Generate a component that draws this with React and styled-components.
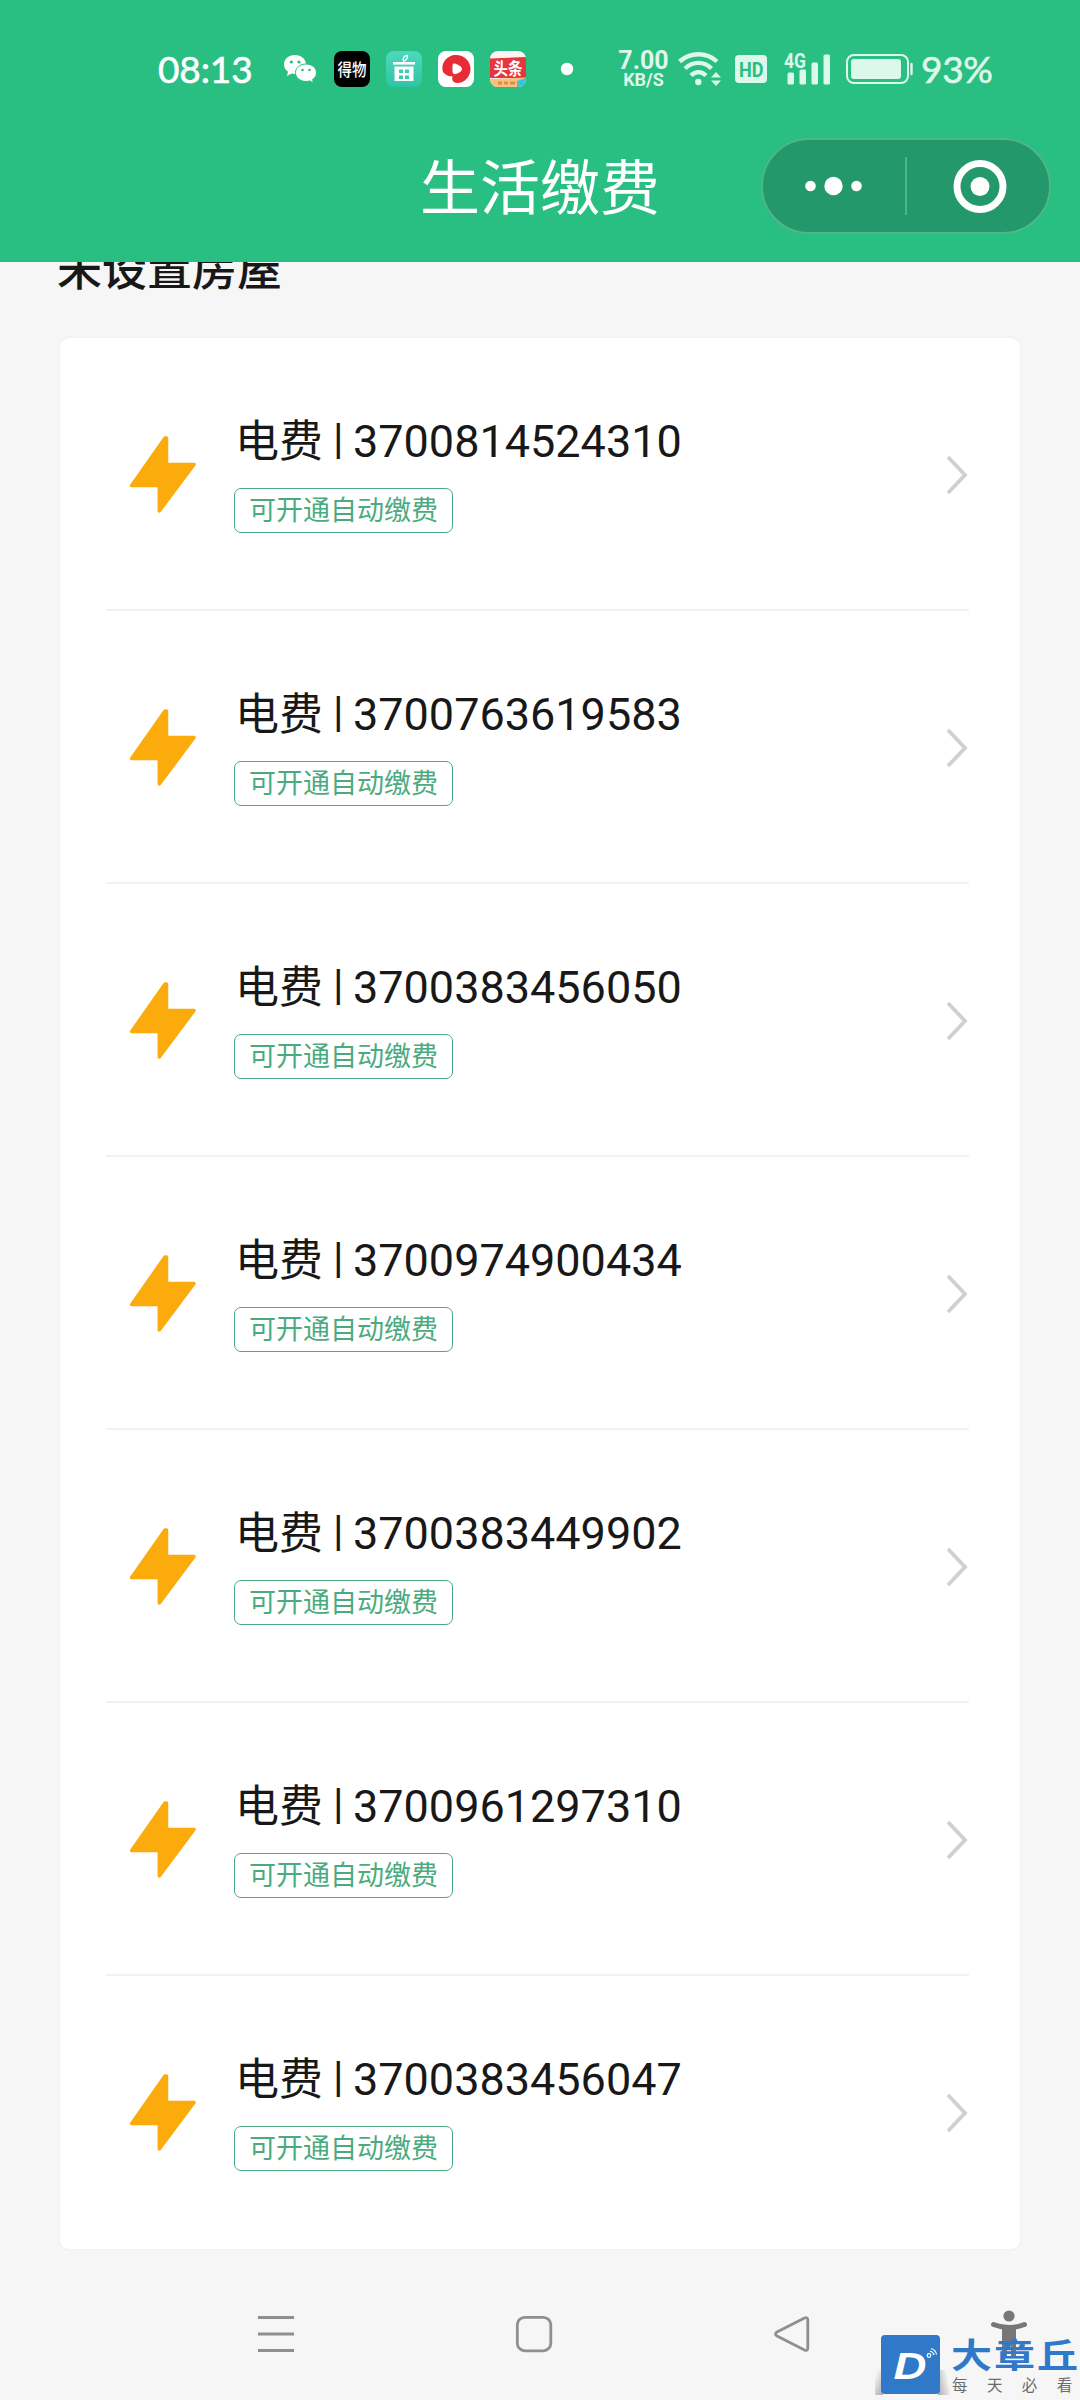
import styled, { createGlobalStyle } from "styled-components";

const GlobalStyle = createGlobalStyle`
  * {
    box-sizing: border-box;
  }
  body {
    margin: 0;
    background: #f6f6f6;
    font-family: Roboto, "Noto Sans CJK SC", sans-serif;
    color: #181818;
  }
`;

const Page = styled.div`
  position: relative;
  display: flex;
  flex-direction: column;
  width: 1080px;
  height: 2400px;
  overflow: hidden;
`;

const Header = styled.header`
  flex: none;
  height: 262px;
  background: #29be82;
  color: #fff;
`;

const StatusBar = styled.div`
  display: flex;
  align-items: center;
  height: 138px;
  padding-left: 158px;
`;

const Slot = styled.div`
  flex: none;
  display: flex;
  align-items: center;
  width: ${({ $width }) => $width}px;
  height: 138px;
  color: ${({ $soft }) => ($soft ? "#dcf8ea" : "#fff")};
  svg {
    flex: none;
    display: block;
  }
`;

const StatusText = styled.span`
  font-family: Lato, sans-serif;
  font-size: 37px;
  letter-spacing: ${({ $spacing }) => $spacing || 0}px;
  line-height: 46px;
  white-space: nowrap;
  -webkit-text-stroke: 0.6px currentColor;
`;

const Speed = styled.div`
  display: flex;
  flex-direction: column;
  align-items: center;
  width: 51px;
  padding-top: 2px;
  font-family: Roboto, sans-serif;
  font-weight: 700;
`;

const SpeedValue = styled.span`
  font-size: 25px;
  line-height: 20px;
`;

const SpeedUnit = styled.span`
  font-size: 18px;
  line-height: 18px;
`;

const TitleBar = styled.div`
  display: grid;
  grid-template-columns: 420px 341px 290px;
  align-items: start;
  height: 124px;
`;

const Title = styled.h1`
  grid-column: 2;
  margin: 0;
  padding-top: 17px;
  font-size: 60px;
  font-weight: 400;
  line-height: 70px;
  white-space: nowrap;
`;

const Capsule = styled.div`
  grid-column: 3;
  display: flex;
  align-items: center;
  height: 96px;
  border: 2px solid #4fb689;
  border-radius: 48px;
  background: #23986a;
`;

const CapsuleHalf = styled.div`
  display: flex;
  justify-content: center;
  width: 142px;
  height: 58px;
  border-left: ${({ $divided }) => ($divided ? "2px solid #4fb689" : "none")};
`;

const SectionTitle = styled.h2`
  flex: none;
  height: 76px;
  margin: 0;
  padding-left: 57px;
  overflow: hidden;
  font-size: 45px;
  font-weight: 500;
  line-height: 18px;
`;

const Card = styled.main`
  flex: none;
  margin: 0 60px;
  border-radius: 9px;
  background: #fff;
  box-shadow: 0 0 3px rgba(0, 0, 0, 0.05);
`;

const Row = styled.div`
  display: flex;
  height: 273px;
  margin: 0 51px 0 46px;
  border-bottom: ${({ $last }) => ($last ? "none" : "2px solid #f2f2f2")};
`;

const BoltIcon = styled.svg`
  flex: none;
  margin: 97px 0 0 23px;
`;

const Info = styled.div`
  flex: 1;
  display: flex;
  flex-direction: column;
  align-items: flex-start;
  padding: 77px 0 0 38px;
`;

const Account = styled.div`
  display: flex;
  height: 73px;
  font-size: 45px;
  line-height: 54px;
  white-space: nowrap;
`;

const Kind = styled.span`
  width: 99px;
  padding-left: 1px;
  font-size: 44px;
  line-height: 55px;
`;

const Bar = styled.span`
  width: 20px;
  font-size: 43px;
  line-height: 46px;
`;

const Tag = styled.span`
  display: flex;
  align-items: center;
  height: 45px;
  padding: 1px 14px 0;
  border: 1.5px solid #4bab7e;
  border-radius: 7px;
  color: #4bab7e;
  font-size: 27px;
  line-height: 40px;
  white-space: nowrap;
`;

const Chevron = styled.svg`
  flex: none;
  margin-top: 116px;
`;

const NavBar = styled.nav`
  display: grid;
  grid-template-columns: 258px 258px 217px 40px;
  align-items: start;
  height: 151px;
  padding: 61px 0 0 257px;
`;

const Watermark = styled.div`
  position: absolute;
  left: 875px;
  top: 2330px;
  display: flex;
  width: 205px;
  height: 65px;
`;

const Logo = styled.svg`
  flex: none;
`;

const Brand = styled.div`
  height: 45px;
  color: #3078c8;
  font-family: "Noto Sans CJK SC", sans-serif;
  font-size: 41px;
  font-weight: 700;
  letter-spacing: 2px;
  line-height: 46px;
  white-space: nowrap;
  transform: scaleY(0.84);
  transform-origin: 0 55%;
`;

const Slogan = styled.div`
  padding-left: 1px;
  color: #6c6c6c;
  font-family: "Noto Sans CJK SC", sans-serif;
  font-size: 15.5px;
  letter-spacing: 19.4px;
  line-height: 19px;
  white-space: nowrap;
`;

const accounts = [
  "3700814524310",
  "3700763619583",
  "3700383456050",
  "3700974900434",
  "3700383449902",
  "3700961297310",
  "3700383456047",
];

const WechatIcon = () => (
  <svg width="34" height="30" viewBox="0 0 34 30">
    <path
      d="M12 1C5.500 1 1 5 1 10.500c0 3 1.600 5.600 4 7.300L4 22l4.500-2.500c1.200.3 2.300.5 3.500.5 6 0 11-4 11-9.500S18 1 12 1z"
      fill="#fff"
    />
    <path
      d="M23 10c-6 0-10.500 3.800-10.500 8.700S17 27.500 23 27.500c1.200 0 2.500-.2 3.600-.6L30.500 29l-1-3.400c2.400-1.600 4-4 4-6.900C33.500 13.800 29 10 23 10z"
      fill="#fff"
      stroke="#29be82"
      strokeWidth="1"
    />
    <circle cx="8.300" cy="8" r="1.600" fill="#29be82" />
    <circle cx="16" cy="8" r="1.600" fill="#29be82" />
    <circle cx="19.500" cy="16" r="1.300" fill="#29be82" />
    <circle cx="26.500" cy="16" r="1.300" fill="#29be82" />
  </svg>
);

const DewuIcon = () => (
  <svg width="36" height="36" viewBox="0 0 36 36">
    <rect width="36" height="36" rx="8" fill="#000" />
    <text
      x="3.500"
      y="24.500"
      textLength="29"
      lengthAdjust="spacingAndGlyphs"
      fill="#fff"
      fontFamily="Noto Sans CJK SC"
      fontSize="17.500"
      fontWeight="500"
    >
      得物
    </text>
  </svg>
);

const HouseIcon = () => (
  <svg width="36" height="36" viewBox="0 0 36 36">
    <defs>
      <linearGradient id="house" x1="0" y1="0" x2="0" y2="1">
        <stop offset="0" stopColor="#4fd8be" />
        <stop offset="1" stopColor="#2fc4a4" />
      </linearGradient>
    </defs>
    <rect width="36" height="36" rx="8" fill="url(#house)" />
    <path d="M7 11h22v2.600H7z" fill="#fff" />
    <path
      fillRule="evenodd"
      d="M8.500 15.500h19v14.500h-19zM13 18.500v3.500h4v-3.500zM19 18.500v3.500h4v-3.500zM13 24.500V28h4v-3.500zM19 24.500V28h4v-3.500z"
      fill="#fff"
    />
    <path d="M17.500 10C16.500 6.500 18.500 4.500 21.500 4.500 21.500 7.500 20.500 9.500 17.500 10z" fill="none" stroke="#fff" strokeWidth="1.300" />
  </svg>
);

const VideoIcon = () => (
  <svg width="36" height="36" viewBox="0 0 36 36">
    <rect width="36" height="36" rx="8" fill="#fff" />
    <path
      d="M18 4c8 0 14.500 6 14.500 14S26 32 19.500 32C15 32 13.500 29 14.500 25c-3.500.8-7-.8-9.500-4C2.500 12 9 4 18 4z"
      fill="#e82c36"
    />
    <path
      d="M14.500 14.500c0-1.800 1.500-2.300 3-1.800 3.500 1.200 6.500 3.300 6.500 5.300s-3 4-6 5c-2 .6-3.500-.6-3.500-2.500z"
      fill="#fff"
    />
  </svg>
);

const ToutiaoIcon = () => (
  <svg width="36" height="36" viewBox="0 0 36 36">
    <defs>
      <clipPath id="tt">
        <rect width="36" height="36" rx="8" />
      </clipPath>
    </defs>
    <g clipPath="url(#tt)">
      <rect width="36" height="36" fill="#fdf3f0" />
      <path d="M0 7.500l36-1.500v21H0z" fill="#e8343f" />
      <path d="M0 28l36-1.500V36H0z" fill="#f7c27c" />
      <path d="M27 30l9-3v9h-9z" fill="#35c4d8" />
      <path d="M8 32h4m2 0h4m2 0h5" stroke="#e08a4e" strokeWidth="3" />
    </g>
    <text
      x="3.500"
      y="23.500"
      textLength="29"
      lengthAdjust="spacingAndGlyphs"
      fill="#fff"
      fontFamily="Noto Sans CJK SC"
      fontSize="16.500"
      fontWeight="700"
    >
      头条
    </text>
  </svg>
);

const WifiIcon = () => (
  <svg width="46" height="36" viewBox="0 0 46 36" fill="none" stroke="currentColor" strokeWidth="4.400">
    <path d="M1.500 10.500C12.500.8 28.500.8 39 10.500" />
    <path d="M7 17.500c8-7.500 19-7.500 26.500 0" />
    <path d="M13 24.500c4.500-4.300 10.500-4.300 15 0" />
    <circle cx="20.300" cy="31" r="3.200" fill="currentColor" stroke="none" />
    <path d="M33 26.500l5-5.500 5 5.500zM33 29.500l5 5.500 5-5.500z" fill="currentColor" stroke="none" />
  </svg>
);

const HdIcon = () => (
  <svg width="32" height="28" viewBox="0 0 32 28">
    <rect width="32" height="28" rx="4" fill="currentColor" />
    <text
      x="4"
      y="21.500"
      textLength="24.500"
      lengthAdjust="spacingAndGlyphs"
      fill="#29be82"
      fontFamily="Roboto"
      fontSize="21"
      fontWeight="700"
    >
      HD
    </text>
  </svg>
);

const SignalIcon = () => (
  <svg width="48" height="34" viewBox="0 0 48 34" fill="currentColor">
    <text x="0" y="15.500" textLength="22" lengthAdjust="spacingAndGlyphs" fontFamily="Roboto" fontSize="19.500" fontWeight="700">
      4G
    </text>
    <rect x="3.500" y="20.500" width="6.500" height="12" rx="1.500" />
    <rect x="15.500" y="17.500" width="6.500" height="15" rx="1.500" />
    <rect x="27.500" y="10.500" width="6.500" height="22" rx="1.500" />
    <rect x="39.500" y="2.500" width="6.500" height="30" rx="1.500" />
  </svg>
);

const BatteryIcon = () => (
  <svg width="68" height="30" viewBox="0 0 68 30">
    <rect x="1" y="1" width="61" height="28" rx="7" fill="none" stroke="currentColor" strokeWidth="2" />
    <rect x="5" y="5" width="50" height="20" rx="3" fill="currentColor" />
    <path d="M65.500 10v10" stroke="currentColor" strokeWidth="2.400" strokeLinecap="round" />
  </svg>
);

const AccountRow = ({ number, last }) => (
  <Row $last={last}>
    <BoltIcon width="67" height="79" viewBox="0 0 67 79">
      <path
        d="M36 3L2.700 50.500h27.600V76L65 29.500H37.500V3z"
        fill="#fbac0c"
        stroke="#fbac0c"
        strokeWidth="3.500"
        strokeLinejoin="round"
      />
    </BoltIcon>
    <Info>
      <Account>
        <Kind>电费</Kind>
        <Bar>|</Bar>
        {number}
      </Account>
      <Tag>可开通自动缴费</Tag>
    </Info>
    <Chevron width="23" height="42" viewBox="0 0 23 42">
      <path d="M2 3l17 18L2 39" fill="none" stroke="#d0d0d0" strokeWidth="3.800" />
    </Chevron>
  </Row>
);

export default function App() {
  return (
    <>
      <GlobalStyle />
      <Page>
        <Header>
          <StatusBar>
            <Slot $width={125}>
              <StatusText $spacing={-0.1}>08:13</StatusText>
            </Slot>
            <Slot $width={51}>
              <WechatIcon />
            </Slot>
            <Slot $width={52}>
              <DewuIcon />
            </Slot>
            <Slot $width={52}>
              <HouseIcon />
            </Slot>
            <Slot $width={52}>
              <VideoIcon />
            </Slot>
            <Slot $width={70}>
              <ToutiaoIcon />
            </Slot>
            <Slot $width={58}>
              <svg width="14" height="14">
                <circle cx="7" cy="7" r="6.200" fill="#fff" />
              </svg>
            </Slot>
            <Slot $width={60} $soft>
              <Speed>
                <SpeedValue>7.00</SpeedValue>
                <SpeedUnit>KB/S</SpeedUnit>
              </Speed>
            </Slot>
            <Slot $width={57} $soft>
              <WifiIcon />
            </Slot>
            <Slot $width={49} $soft>
              <HdIcon />
            </Slot>
            <Slot $width={62} $soft>
              <SignalIcon />
            </Slot>
            <Slot $width={75} $soft>
              <BatteryIcon />
            </Slot>
            <Slot $width={80} $soft>
              <StatusText $spacing={-0.3}>93%</StatusText>
            </Slot>
          </StatusBar>
          <TitleBar>
            <Title>生活缴费</Title>
            <Capsule>
              <CapsuleHalf>
                <svg width="58" height="58" fill="#fff">
                  <circle cx="5.500" cy="29" r="5.300" />
                  <circle cx="28.500" cy="29" r="9.200" />
                  <circle cx="51.500" cy="29" r="5.300" />
                </svg>
              </CapsuleHalf>
              <CapsuleHalf $divided>
                <svg width="60" height="58">
                  <circle cx="33" cy="29.500" r="23" fill="none" stroke="#fff" strokeWidth="7" />
                  <circle cx="33" cy="29.500" r="9.500" fill="#fff" />
                </svg>
              </CapsuleHalf>
            </Capsule>
          </TitleBar>
        </Header>
        <SectionTitle>未设置房屋</SectionTitle>
        <Card>
          {accounts.map((number, i) => (
            <AccountRow key={number} number={number} last={i === accounts.length - 1} />
          ))}
        </Card>
        <NavBar>
          <svg width="40" height="48" fill="none" stroke="#8f8f8f" strokeWidth="3">
            <path d="M1 7.500h36M1 24h36M1 40.500h36" />
          </svg>
          <svg width="40" height="48" fill="none" stroke="#8f8f8f" strokeWidth="2.800">
            <rect x="2.300" y="7.300" width="33.500" height="33.500" rx="7.500" />
          </svg>
          <svg width="40" height="48" fill="none" stroke="#8f8f8f" strokeWidth="2.800">
            <path d="M31.500 8c2-1 3.300 0 3.300 2v28c0 2-1.300 3-3.300 2L4 26c-2-1.200-2-2.800 0-4z" />
          </svg>
          <svg width="40" height="54" viewBox="0 0 40 54">
            <circle cx="19" cy="6" r="5.600" fill="#777" />
            <path d="M3.500 14.500c10 4 21 4 31 0" fill="none" stroke="#777" strokeWidth="5" strokeLinecap="round" />
            <path d="M12 15h14v33h-5V36h-4v12h-5z" fill="#777" />
          </svg>
        </NavBar>
        <Watermark>
          <Logo width="76" height="65" viewBox="0 0 76 65">
            <defs>
              <linearGradient id="shadeLeft" x1="1" y1="1" x2="0.300" y2="0">
                <stop offset="0" stopColor="#777" stopOpacity="0.6" />
                <stop offset="1" stopColor="#777" stopOpacity="0" />
              </linearGradient>
              <linearGradient id="shadeRight" x1="0" y1="1" x2="0.900" y2="0.600">
                <stop offset="0" stopColor="#777" stopOpacity="0.6" />
                <stop offset="1" stopColor="#777" stopOpacity="0" />
              </linearGradient>
            </defs>
            <path d="M0 40h8v25H0z" fill="url(#shadeLeft)" />
            <path d="M63 40h13v25H63z" fill="url(#shadeRight)" />
            <rect x="6" y="5" width="59" height="59" rx="4" fill="#3078c8" />
            <text
              x="18.500"
              y="49"
              textLength="33"
              lengthAdjust="spacingAndGlyphs"
              fill="#fff"
              fontFamily="Liberation Sans"
              fontSize="37"
              fontStyle="italic"
              fontWeight="700"
            >
              D
            </text>
            <g fill="none" stroke="#fff" strokeWidth="1.200">
              <circle cx="54" cy="25.500" r="1.800" />
              <path d="M55 21c2 .6 3.500 2 4 4M56 18.500c3 .8 5 3 5.500 6" />
            </g>
          </Logo>
          <div>
            <Brand>大章丘</Brand>
            <Slogan>每天必看</Slogan>
          </div>
        </Watermark>
      </Page>
    </>
  );
}
